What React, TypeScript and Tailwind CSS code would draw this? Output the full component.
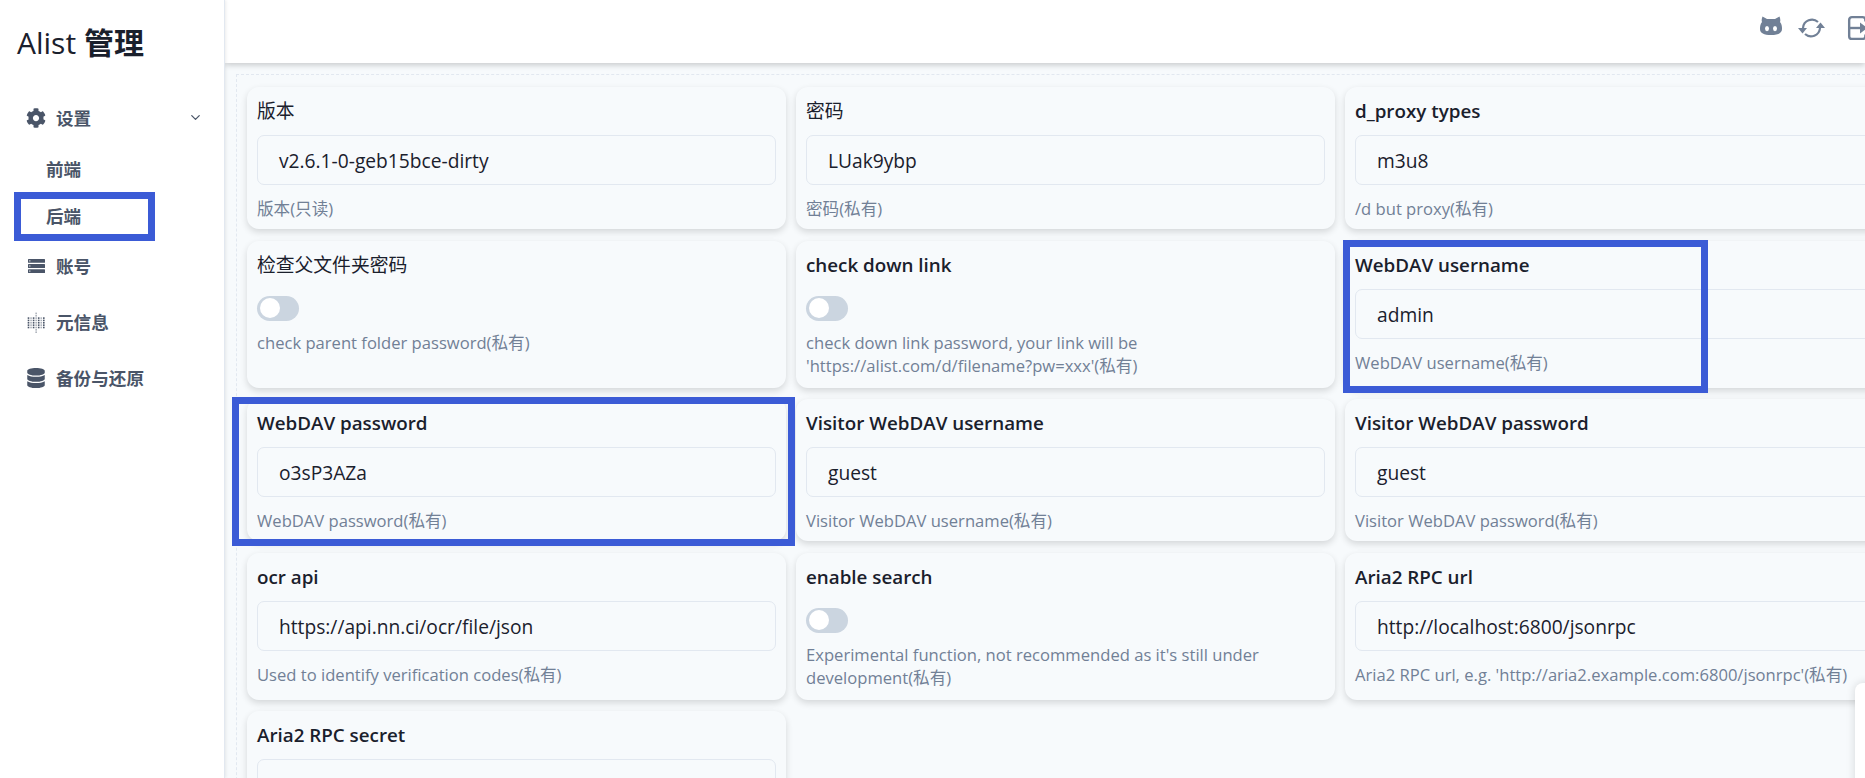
import { FaCog, FaDatabase } from 'react-icons/fa';
import { FiChevronDown } from 'react-icons/fi';

const font = "font-['Open_Sans','Noto_Sans_CJK_SC',sans-serif]";

type Item = { label: string; value?: string; toggle?: boolean; hint: string[]; cjk?: boolean };

const ITEMS: Item[] = [
  { label: '版本', value: 'v2.6.1-0-geb15bce-dirty', hint: ['版本(只读)'], cjk: true },
  { label: '密码', value: 'LUak9ybp', hint: ['密码(私有)'], cjk: true },
  { label: 'd_proxy types', value: 'm3u8', hint: ['/d but proxy(私有)'] },
  { label: '检查父文件夹密码', toggle: true, hint: ['check parent folder password(私有)'], cjk: true },
  {
    label: 'check down link',
    toggle: true,
    hint: ['check down link password, your link will be', "'https://alist.com/d/filename?pw=xxx'(私有)"],
  },
  { label: 'WebDAV username', value: 'admin', hint: ['WebDAV username(私有)'] },
  { label: 'WebDAV password', value: 'o3sP3AZa', hint: ['WebDAV password(私有)'] },
  { label: 'Visitor WebDAV username', value: 'guest', hint: ['Visitor WebDAV username(私有)'] },
  { label: 'Visitor WebDAV password', value: 'guest', hint: ['Visitor WebDAV password(私有)'] },
  { label: 'ocr api', value: 'https://api.nn.ci/ocr/file/json', hint: ['Used to identify verification codes(私有)'] },
  {
    label: 'enable search',
    toggle: true,
    hint: ["Experimental function, not recommended as it's still under", 'development(私有)'],
  },
  {
    label: 'Aria2 RPC url',
    value: 'http://localhost:6800/jsonrpc',
    hint: ["Aria2 RPC url, e.g. 'http://aria2.example.com:6800/jsonrpc'(私有)"],
  },
  { label: 'Aria2 RPC secret', value: '', hint: [] },
];

function MetaIcon() {
  const dots = [];
  for (let y = 0; y < 9; y++) {
    for (let x = 0; x < 7; x++) {
      const wide = y >= 2 && y <= 6;
      if (!wide && x !== 3) continue;
      dots.push(
        <rect
          key={`${x}-${y}`}
          x={x * 2.55 + 0.7}
          y={y * 2.35 + 0.6}
          width="1.6"
          height="1.6"
          opacity={wide && x % 2 === 0 ? 1 : 0.45}
        />,
      );
    }
  }
  return (
    <svg viewBox="0 0 18 21" className="w-[18px] h-[21px] fill-[#4a5568]">
      {dots}
    </svg>
  );
}

function ServerIcon() {
  return (
    <svg viewBox="0 0 17 14" className="w-[17px] h-[14px] fill-[#4a5568]">
      <rect y="0" width="17" height="3.8" rx="0.5" />
      <rect y="5.1" width="17" height="3.8" rx="0.5" />
      <rect y="10.2" width="17" height="3.8" rx="0.5" />
      <rect x="1.2" y="1.4" width="1.2" height="1" fill="#fff" />
      <rect x="1.2" y="6.5" width="1.2" height="1" fill="#fff" />
      <rect x="1.2" y="11.6" width="1.2" height="1" fill="#fff" />
    </svg>
  );
}

function CatIcon() {
  return (
    <svg viewBox="0 0 22 19" className="w-[22px] h-[19px] fill-[#718096]">
      <path d="M2.5 0.5 L7 3 H15 L19.5 0.5 C20.5 3 20.5 5 20 6 C22 8.5 22 11 22 13 C22 17 18 19 11 19 C4 19 0 17 0 13 C0 11 0 8.5 2 6 C1.5 5 1.5 3 2.5 0.5Z" />
      <ellipse cx="7" cy="12.6" rx="2" ry="2.6" fill="#fff" />
      <ellipse cx="15" cy="12.6" rx="2" ry="2.6" fill="#fff" />
    </svg>
  );
}

function SyncIcon() {
  return (
    <svg viewBox="0 0 27 20" className="w-[27px] h-[20px]">
      <path d="M5 10 A9 9 0 0 1 20 4" fill="none" stroke="#718096" strokeWidth="2.2" />
      <path d="M22 10 A9 9 0 0 1 7 16" fill="none" stroke="#718096" strokeWidth="2.2" />
      <polygon points="0,10 9,10 4.5,15.5" fill="#718096" />
      <polygon points="18,10 27,10 22.5,4.5" fill="#718096" />
    </svg>
  );
}

function ExitIcon() {
  return (
    <svg viewBox="0 0 24 24" className="w-[26px] h-[26px] shrink-0">
      <path
        d="M17 6V4.5A2.5 2.5 0 0 0 14.5 2H4.5A2.5 2.5 0 0 0 2 4.5v15A2.5 2.5 0 0 0 4.5 22h10a2.5 2.5 0 0 0 2.5-2.5V18"
        fill="none"
        stroke="#718096"
        strokeWidth="2.2"
      />
      <path d="M2 12h11" stroke="#718096" strokeWidth="2.2" />
      <polygon points="12,7 19,12 12,17" fill="#718096" />
    </svg>
  );
}

function NavRow({ icon, label, className }: { icon: React.ReactNode; label: string; className: string }) {
  return (
    <div className={`flex items-center gap-[10px] pl-[26px] h-6 ${className}`}>
      <span className="w-[20px] flex justify-center text-[#4a5568]">{icon}</span>
      <span className="text-[17.6px] font-semibold text-[#4a5568]">{label}</span>
    </div>
  );
}

function Card({ item }: { item: Item }) {
  return (
    <div className="bg-[#f7fafc] rounded-[12px] shadow-[0_3px_7px_rgba(0,0,0,0.14)] px-[10px] pt-[10px] pb-[9px]">
      <div className={`text-[18.8px] leading-[28px] text-[#1a202c] ${item.cjk ? 'font-normal' : 'font-semibold'}`}>
        {item.label}
      </div>
      {item.toggle ? (
        <div className="mt-[17px] mb-[10px] w-[42px] h-[25px] rounded-full bg-[#cbd5e0] p-[2.5px]">
          <div className="w-[20px] h-[20px] rounded-full bg-white" />
        </div>
      ) : (
        <div className="mt-[10px] mb-[12px] h-[50px] border border-[#e2e8f0] rounded-[7px] pl-[21px] pt-[3px] flex items-center text-[19.2px] text-[#1a202c]">
          {item.value}
        </div>
      )}
      <div className={`text-[16.6px] leading-[23px] text-[#718096] whitespace-nowrap ${item.toggle ? 'pb-[2px]' : ''}`}>
        {item.hint.map(line => (
          <div key={line}>{line}</div>
        ))}
      </div>
    </div>
  );
}

export default function App() {
  return (
    <div className={`relative w-[1865px] h-[778px] overflow-hidden flex bg-white ${font}`}>
      <aside className="w-[225px] shrink-0 bg-white border-r border-[#e2e8f0] shadow-[1px_0_3px_rgba(0,0,0,0.08)] z-10">
        <div className="pl-[17px] pt-[22px] text-[30px] leading-[42px] text-[#1a202c]">
          <span className="font-medium">Alist </span>
          <span className="font-bold">管理</span>
        </div>
        <NavRow icon={<FaCog size={20} />} label="设置" className="mt-[42px]" />
        <div className="pl-[46px] mt-[27px] text-[17.6px] leading-6 font-semibold text-[#4a5568]">前端</div>
        <div className="pl-[46px] mt-[23px] text-[17.6px] leading-6 font-semibold text-[#4a5568]">后端</div>
        <NavRow icon={<ServerIcon />} label="账号" className="mt-[26px]" />
        <NavRow icon={<MetaIcon />} label="元信息" className="mt-[32px]" />
        <NavRow icon={<FaDatabase size={20} />} label="备份与还原" className="mt-[32px]" />
      </aside>

      <div className="flex-1 min-w-0 flex flex-col bg-[#f7fafc]">
        <header className="h-[63px] shrink-0 bg-white shadow-[0_2px_6px_rgba(0,0,0,0.2)] flex items-center justify-end z-[5] overflow-hidden">
          <div className="w-[22px] mb-[12px]">
            <CatIcon />
          </div>
          <div className="w-[27px] ml-[16px] mb-[7px]">
            <SyncIcon />
          </div>
          <div className="w-[17px] ml-[23px] mb-[7px] -translate-x-px">
            <ExitIcon />
          </div>
        </header>
        <main className="mt-[11px] ml-[11px] pl-[10px] pt-[12px] border-l border-t border-dashed border-[#e2e8f0]">
          <div className="grid grid-cols-[repeat(3,539px)] gap-x-[10px] gap-y-[11.5px]">
            {ITEMS.map(item => (
              <Card key={item.label} item={item} />
            ))}
          </div>
        </main>
      </div>

      {/* annotation boxes drawn over the page */}
      <div className="absolute left-[14px] top-[192px] w-[141px] h-[49px] border-[7px] border-[#3b5bd6] z-20" />
      <div className="absolute left-[1343px] top-[240px] w-[365px] h-[153px] border-[7px] border-[#3b5bd6] z-20" />
      <div className="absolute left-[232px] top-[397px] w-[563px] h-[149px] border-[7px] border-[#3b5bd6] z-20" />
      <div className="absolute left-[1855px] top-[683px] w-[40px] h-[120px] bg-white rounded-lg shadow-[0_0_10px_rgba(0,0,0,0.14)] z-20" />
      <FiChevronDown className="absolute left-[188px] top-[110px] text-[#4a5568] z-20" size={15} />
    </div>
  );
}
